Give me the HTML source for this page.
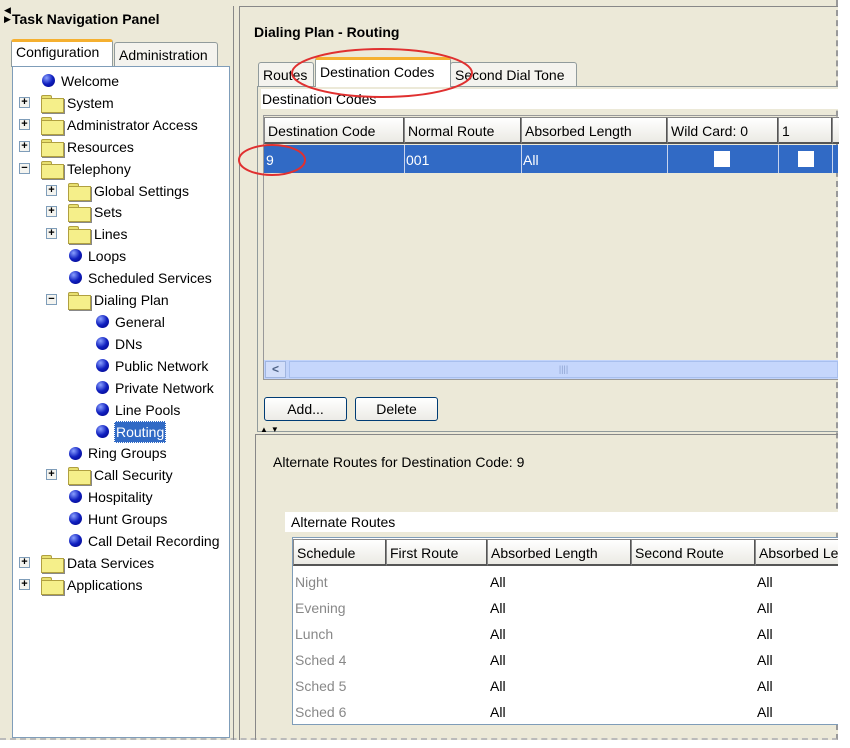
<!DOCTYPE html>
<html><head><meta charset="utf-8"><style>
*{margin:0;padding:0;box-sizing:border-box}
body{width:850px;height:748px;background:#fff;position:relative;overflow:hidden;font-family:"Liberation Sans",sans-serif;font-size:14px;color:#000}
.a{position:absolute}
.bg{left:0;top:0;width:838px;height:740px;background:#ece9d8;border-right:2px dashed #999;border-bottom:2px dashed #bbb}
.tree{left:12px;top:66px;width:218px;height:672px;background:#fff;border:1px solid #7f9db9}
.it{position:absolute;white-space:nowrap;font-size:14px;line-height:16px}
.ball{position:absolute;width:13px;height:13px;border-radius:50%;background:radial-gradient(circle at 35% 30%,#8aa0ff,#1020c0 50%,#000080)}
.fold{position:absolute;width:21px;height:16px}
.fold:before{content:"";position:absolute;left:0;top:0;width:9px;height:4px;background:#e8e070;border:1px solid #b0a040;border-bottom:none;border-radius:2px 2px 0 0}
.fold:after{content:"";position:absolute;left:0;top:3px;width:21px;height:13px;background:#f5ef8a;border:1px solid #b0a040;box-shadow:1px 1px 0 #888}
.pm{position:absolute;width:11px;height:11px;border:1px solid #7f9db9;background:#f4f4f0;font-size:11px;line-height:9px;text-align:center;font-weight:bold;color:#000}
.tab{position:absolute;border:1px solid #919b9c;border-bottom:none;background:#f4f3ee;border-radius:3px 3px 0 0;font-size:14px;padding:4px 3px 0 4px}
.hd{position:absolute;height:27px;background:linear-gradient(#fff,#ebeae4);border:1px solid #888;border-right:2px solid #555;border-bottom:2px solid #555;font-size:14px;padding:5px 3px;white-space:nowrap;overflow:hidden}
.btn{position:absolute;height:24px;border:1px solid #003c74;border-radius:3px;background:linear-gradient(#fff,#ecebe6);text-align:center;font-size:14px;line-height:22px}
.cb{position:absolute;width:16px;height:16px;background:#fff}
</style></head><body>
<div class="a bg"></div>
<div class="a" style="left:4px;top:6px;font-size:9px;line-height:9px">◀<br>▶</div>
<div class="a" style="left:12px;top:11px;font-weight:bold;font-size:14px">Task Navigation Panel</div>
<div class="tab" style="left:11px;top:39px;width:102px;height:28px;background:#fff;border-top:3px solid #f5b030;padding-top:2px">Configuration</div>
<div class="tab" style="left:114px;top:42px;width:104px;height:24px">Administration</div>
<div class="a tree">
<div class="ball" style="left:29px;top:7px"></div><div class="it" style="left:48px;top:6px">Welcome</div>
<div class="pm" style="left:6px;top:30px">+</div><div class="fold" style="left:28px;top:28px"></div><div class="it" style="left:54px;top:28px">System</div>
<div class="pm" style="left:6px;top:52px">+</div><div class="fold" style="left:28px;top:50px"></div><div class="it" style="left:54px;top:50px">Administrator Access</div>
<div class="pm" style="left:6px;top:74px">+</div><div class="fold" style="left:28px;top:72px"></div><div class="it" style="left:54px;top:72px">Resources</div>
<div class="pm" style="left:6px;top:96px">−</div><div class="fold" style="left:28px;top:94px"></div><div class="it" style="left:54px;top:94px">Telephony</div>
<div class="pm" style="left:33px;top:118px">+</div><div class="fold" style="left:55px;top:116px"></div><div class="it" style="left:81px;top:116px">Global Settings</div>
<div class="pm" style="left:33px;top:139px">+</div><div class="fold" style="left:55px;top:137px"></div><div class="it" style="left:81px;top:137px">Sets</div>
<div class="pm" style="left:33px;top:161px">+</div><div class="fold" style="left:55px;top:159px"></div><div class="it" style="left:81px;top:159px">Lines</div>
<div class="ball" style="left:56px;top:182px"></div><div class="it" style="left:75px;top:181px">Loops</div>
<div class="ball" style="left:56px;top:204px"></div><div class="it" style="left:75px;top:203px">Scheduled Services</div>
<div class="pm" style="left:33px;top:227px">−</div><div class="fold" style="left:55px;top:225px"></div><div class="it" style="left:81px;top:225px">Dialing Plan</div>
<div class="ball" style="left:83px;top:248px"></div><div class="it" style="left:102px;top:247px">General</div>
<div class="ball" style="left:83px;top:270px"></div><div class="it" style="left:102px;top:269px">DNs</div>
<div class="ball" style="left:83px;top:292px"></div><div class="it" style="left:102px;top:291px">Public Network</div>
<div class="ball" style="left:83px;top:314px"></div><div class="it" style="left:102px;top:313px">Private Network</div>
<div class="ball" style="left:83px;top:336px"></div><div class="it" style="left:102px;top:335px">Line Pools</div>
<div class="ball" style="left:83px;top:358px"></div><div class="it" style="left:101px;top:354px;background:#316ac5;color:#fff;padding:2px 1px;border:1px dotted #fff">Routing</div>
<div class="ball" style="left:56px;top:380px"></div><div class="it" style="left:75px;top:378px">Ring Groups</div>
<div class="pm" style="left:33px;top:402px">+</div><div class="fold" style="left:55px;top:400px"></div><div class="it" style="left:81px;top:400px">Call Security</div>
<div class="ball" style="left:56px;top:423px"></div><div class="it" style="left:75px;top:422px">Hospitality</div>
<div class="ball" style="left:56px;top:445px"></div><div class="it" style="left:75px;top:444px">Hunt Groups</div>
<div class="ball" style="left:56px;top:467px"></div><div class="it" style="left:75px;top:466px">Call Detail Recording</div>
<div class="pm" style="left:6px;top:490px">+</div><div class="fold" style="left:28px;top:488px"></div><div class="it" style="left:54px;top:488px">Data Services</div>
<div class="pm" style="left:6px;top:512px">+</div><div class="fold" style="left:28px;top:510px"></div><div class="it" style="left:54px;top:510px">Applications</div>
</div>
<div class="a" style="left:233px;top:6px;width:1px;height:734px;background:#888"></div>
<div class="a" style="left:239px;top:6px;width:1px;height:734px;background:#888"></div>
<div class="a" style="left:240px;top:6px;width:598px;height:1px;background:#888"></div>
<div class="a" style="left:254px;top:24px;font-weight:bold;font-size:14px">Dialing Plan - Routing</div>
<div class="tab" style="left:258px;top:62px;width:56px;height:25px">Routes</div>
<div class="tab" style="left:450px;top:62px;width:127px;height:25px">Second Dial Tone</div>
<div class="tab" style="left:315px;top:57px;width:136px;height:30px;background:#fff;border-top:3px solid #f5b030;padding-top:4px;z-index:2">Destination Codes</div>
<div class="a" style="left:257px;top:86px;width:581px;height:346px;border:1px solid #919b9c;border-right:none"></div>
<div class="a" style="left:261px;top:89px;width:577px;height:20px;background:#fff;font-size:14px;padding:2px 1px">Destination Codes</div>
<div class="a" style="left:263px;top:115px;width:575px;height:265px;border:1px solid #999;border-right:none"></div>
<div class="hd" style="left:264px;top:117px;width:141px">Destination Code</div>
<div class="hd" style="left:404px;top:117px;width:118px">Normal Route</div>
<div class="hd" style="left:521px;top:117px;width:147px">Absorbed Length</div>
<div class="hd" style="left:667px;top:117px;width:112px">Wild Card: 0</div>
<div class="hd" style="left:778px;top:117px;width:55px">1</div>
<div class="hd" style="left:832px;top:117px;width:6px;border-right:none"></div>
<div class="a" style="left:264px;top:145px;width:574px;height:28px;background:#316ac5;color:#fff"></div>
<div class="a" style="left:404px;top:145px;width:1px;height:28px;background:#c8d4ee"></div>
<div class="a" style="left:521px;top:145px;width:1px;height:28px;background:#c8d4ee"></div>
<div class="a" style="left:667px;top:145px;width:1px;height:28px;background:#c8d4ee"></div>
<div class="a" style="left:778px;top:145px;width:1px;height:28px;background:#c8d4ee"></div>
<div class="a" style="left:832px;top:145px;width:1px;height:28px;background:#c8d4ee"></div>
<div class="a" style="left:266px;top:152px;color:#fff">9</div>
<div class="a" style="left:406px;top:152px;color:#fff">001</div>
<div class="a" style="left:523px;top:152px;color:#fff">All</div>
<div class="cb" style="left:714px;top:151px"></div>
<div class="cb" style="left:798px;top:151px"></div>
<div class="a" style="left:264px;top:360px;width:574px;height:19px;background:#c1d3fb"></div>
<div class="a" style="left:265px;top:361px;width:21px;height:17px;background:#d2defa;border:1px solid #a0b5e0;font-size:12px;line-height:15px;text-align:center;color:#4d6185;font-weight:bold">&lt;</div>
<div class="a" style="left:289px;top:361px;width:549px;height:17px;background:#c5d6fc;border:1px solid #a8bfee;font-size:9px;line-height:15px;text-align:center;color:#8ba0cf">||||</div>
<div class="btn" style="left:264px;top:397px;width:83px">Add...</div>
<div class="btn" style="left:355px;top:397px;width:83px">Delete</div>
<div class="a" style="left:260px;top:425px;font-size:8px;letter-spacing:3px">▲▼</div>
<div class="a" style="left:255px;top:434px;width:583px;height:306px;border:1px solid #888;border-right:none;border-bottom:none"></div>
<div class="a" style="left:273px;top:454px">Alternate Routes for Destination Code: 9</div>
<div class="a" style="left:285px;top:512px;width:553px;height:20px;background:#fff;padding:2px 6px">Alternate Routes</div>
<div class="a" style="left:292px;top:537px;width:546px;height:188px;background:#fff;border:1px solid #7f9db9;border-right:none"></div>
<div class="hd" style="left:293px;top:539px;width:94px">Schedule</div>
<div class="hd" style="left:386px;top:539px;width:102px">First Route</div>
<div class="hd" style="left:487px;top:539px;width:145px">Absorbed Length</div>
<div class="hd" style="left:631px;top:539px;width:125px">Second Route</div>
<div class="hd" style="left:755px;top:539px;width:83px;border-right:none">Absorbed Length</div>
<div class="a" style="left:295px;top:569px;color:#888;line-height:26px">Night<br>Evening<br>Lunch<br>Sched 4<br>Sched 5<br>Sched 6</div>
<div class="a" style="left:490px;top:569px;line-height:26px">All<br>All<br>All<br>All<br>All<br>All</div>
<div class="a" style="left:757px;top:569px;line-height:26px">All<br>All<br>All<br>All<br>All<br>All</div>
<svg class="a" style="left:0;top:0;z-index:5" width="850" height="748">
<ellipse cx="382" cy="73" rx="90" ry="24" fill="none" stroke="#e03030" stroke-width="2"/>
<ellipse cx="272" cy="160" rx="33" ry="15" fill="none" stroke="#e03030" stroke-width="2"/>
</svg>
</body></html>
